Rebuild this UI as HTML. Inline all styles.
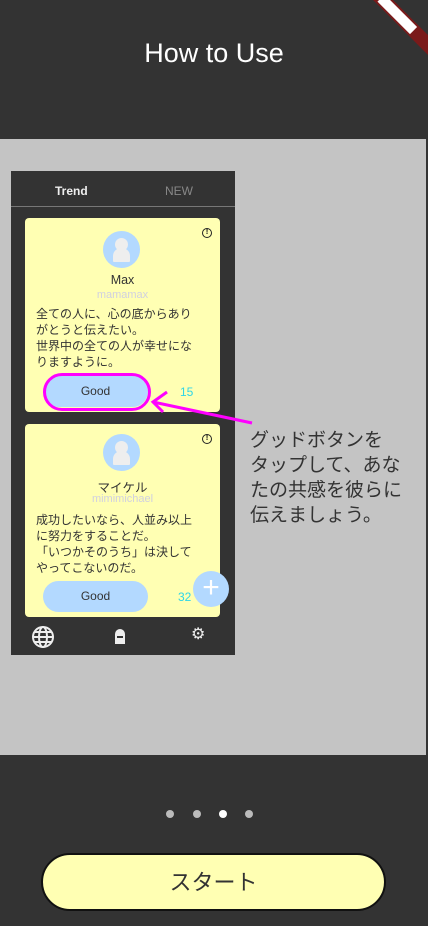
<!DOCTYPE html>
<html><head><meta charset="utf-8"><style>
*{margin:0;padding:0;box-sizing:border-box}
body{width:428px;height:926px;background:#333;position:relative;overflow:hidden;font-family:"Liberation Sans","Noto Sans CJK JP",sans-serif}
.title{position:absolute;top:38px;width:100%;text-align:center;color:#fff;font-size:27px}
.gray{position:absolute;left:0;top:139px;width:426px;height:616px;background:#c4c4c4}
.phone{position:absolute;left:11px;top:171px;width:224px;height:484px;background:#333}
.tabs{position:absolute;top:0;left:0;width:224px;height:36px;border-bottom:1px solid #777}
.tabs span{position:absolute;top:13px;font-size:12px;font-weight:bold}
.card{position:absolute;left:14px;width:195px;background:#ffffb3;border-radius:4px}
.av{position:absolute;left:78px;width:37px;height:37px;border-radius:50%;background:#b3d9ff;overflow:hidden}
.av:before{content:"";position:absolute;left:12px;top:7px;width:13px;height:13px;border-radius:50%;background:#eee}
.av:after{content:"";position:absolute;left:10px;top:17px;width:17px;height:14px;border-radius:8px 8px 1px 1px;background:#eee}
.name{position:absolute;width:100%;text-align:center;font-size:12.5px;color:#333}
.id{position:absolute;width:100%;text-align:center;font-size:11px;color:#d0d0e0}
.txt{position:absolute;left:11px;font-size:12px;line-height:16px;color:#333;white-space:nowrap}
.good{position:absolute;left:18px;width:105px;height:31px;border-radius:16px;background:#b3d9ff;text-align:center;line-height:31px;font-size:12px;color:#333}
.cnt{position:absolute;font-size:12px;color:#2fd6e8}
.ex{position:absolute;right:8px;width:10px;height:10px;border:1.5px solid #222;border-radius:50%;font-size:7px;line-height:7px;text-align:center;font-weight:bold}
.cap{position:absolute;left:250px;top:428px;font-size:19px;line-height:25px;color:#333}
.dot{position:absolute;top:810px;width:8px;height:8px;border-radius:50%;background:#bbb}
.btn{position:absolute;left:41px;top:853px;width:345px;height:58px;border-radius:29px;background:#ffffb3;border:2px solid #111;text-align:center;line-height:56px;font-size:22px;color:#333}
</style></head><body>
<div class="title">How to Use</div>
<div style="position:absolute;right:-30px;top:8px;width:120px;height:14px;background:#7a1a1a;transform:rotate(45deg);transform-origin:center"><div style="position:absolute;left:36px;top:2px;width:46px;height:10px;background:#fff"></div></div>
<div class="gray"></div>
<div class="phone">
 <div class="tabs"><span style="left:44px;color:#eee">Trend</span><span style="left:154px;color:#888;font-weight:normal">NEW</span></div>
 <div class="card" style="top:47px;height:194px">
  <div class="ex" style="top:10px">!</div>
  <div class="av" style="top:13px"></div>
  <div class="name" style="top:55px">Max</div>
  <div class="id" style="top:71px">mamamax</div>
  <div class="txt" style="top:88px">全ての人に、心の底からあり<br>がとうと伝えたい。<br>世界中の全ての人が幸せにな<br>りますように。</div>
  <div class="good" style="top:158px">Good</div>
  <div class="cnt" style="left:155px;top:167px">15</div>
 </div>
 <div class="card" style="top:253px;height:193px">
  <div class="ex" style="top:10px">!</div>
  <div class="av" style="top:10px"></div>
  <div class="name" style="top:53px">マイケル</div>
  <div class="id" style="top:69px">mimimichael</div>
  <div class="txt" style="top:88px">成功したいなら、人並み以上<br>に努力をすることだ。<br>「いつかそのうち」は決して<br>やってこないのだ。</div>
  <div class="good" style="top:157px">Good</div>
  <div class="cnt" style="left:153px;top:166px">32</div>
 </div>
 <div style="position:absolute;left:182px;top:400px;width:36px;height:36px;border-radius:50%;background:#b3d9ff;color:#fff;font-size:30px;line-height:34px;text-align:center">+</div>
 <svg style="position:absolute;left:20px;top:454px" width="24" height="24" viewBox="0 0 24 24" fill="none" stroke="#eee" stroke-width="2"><circle cx="12" cy="12" r="10"/><ellipse cx="12" cy="12" rx="4" ry="10"/><line x1="2" y1="12" x2="22" y2="12"/><line x1="4" y1="7" x2="20" y2="7"/><line x1="4" y1="17" x2="20" y2="17"/></svg>
 <svg style="position:absolute;left:101px;top:456px" width="16" height="18" viewBox="0 0 16 18"><path d="M3 17V7a5 5 0 0 1 10 0v10z" fill="#eee"/><rect x="5" y="9" width="6" height="2" fill="#333"/></svg>
 <div style="position:absolute;left:180px;top:453px;color:#eee;font-size:16px">⚙</div>
</div>
<div style="position:absolute;left:43px;top:373px;width:108px;height:38px;border:3px solid #f0f;border-radius:19px"></div>
<svg style="position:absolute;left:0;top:0" width="428" height="926"><g stroke="#f0f" stroke-width="3" fill="none"><line x1="252" y1="423" x2="153" y2="402"/><polyline points="167,392 153,402 163,412"/></g></svg>
<div class="cap">グッドボタンを<br>タップして、あな<br>たの共感を彼らに<br>伝えましょう。</div>
<div class="dot" style="left:166px"></div><div class="dot" style="left:193px"></div><div class="dot" style="left:219px;background:#fff"></div><div class="dot" style="left:245px"></div>
<div class="btn">スタート</div>
</body></html>
